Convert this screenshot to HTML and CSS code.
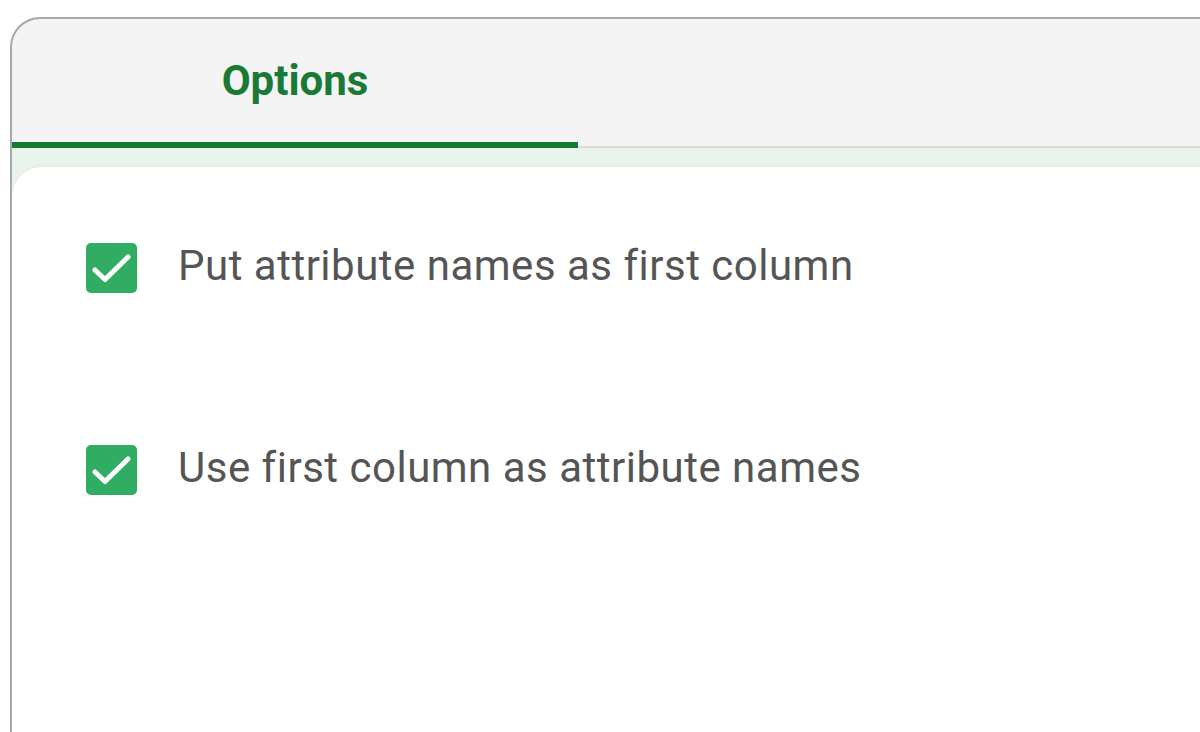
FILE: index.html
```html
<!DOCTYPE html>
<html lang="en">
<head>
    <meta charset="UTF-8">
    <meta name="viewport" content="width=device-width, initial-scale=1.0">
    <title>Options</title>
    <link rel="stylesheet" href="styles.css">
</head>
<body>
    <div class="panel">
        <div class="tabs">
            <div class="tab active">Options</div>
        </div>
        <div class="band">
            <div class="content">
                <label class="option">
                    <span class="check">
                        <svg viewBox="0 0 51 50" width="51" height="50"><path d="M9 27l10 9.5L42 14" fill="none" stroke="#fff" stroke-width="5" stroke-linecap="round" stroke-linejoin="round"/></svg>
                    </span>
                    <span class="label">Put attribute names as first column</span>
                </label>
                <label class="option">
                    <span class="check">
                        <svg viewBox="0 0 51 50" width="51" height="50"><path d="M9 27l10 9.5L42 14" fill="none" stroke="#fff" stroke-width="5" stroke-linecap="round" stroke-linejoin="round"/></svg>
                    </span>
                    <span class="label">Use first column as attribute names</span>
                </label>
            </div>
        </div>
    </div>
</body>
</html>
```

FILE: styles.css
```css
html, body {
    margin: 0;
    padding: 0;
    height: 100%;
    background-color: #fff;
    font-family: Roboto, "Noto Sans", sans-serif;
    overflow: hidden;
}
.panel {
    margin: 17px 0 0 10px;
    height: calc(100vh - 17px);
    box-sizing: border-box;
    border: 2px solid #a8a8a8;
    border-right: none;
    border-bottom: none;
    border-top-left-radius: 30px;
    background-color: #f4f4f4;
    display: flex;
    flex-direction: column;
    overflow: hidden;
}
.tabs {
    display: flex;
    height: 127px;
    flex-shrink: 0;
    border-bottom: 2px solid #dcdcdc;
}
.tab {
    width: 566px;
    display: flex;
    align-items: center;
    justify-content: center;
    box-sizing: border-box;
    font-size: 42px;
    font-weight: 700;
    color: #197a36;
}
.tab.active {
    border-bottom: 6px solid #137a2f;
    margin-bottom: -2px;
}
.band {
    flex: 1;
    background-color: #e8f4ec;
    padding-top: 19px;
}
.content {
    height: 100%;
    background-color: #fff;
    border-top-left-radius: 30px;
    box-shadow: 0 -2px 4px rgba(0, 0, 0, 0.03);
    padding: 76px 0 0 74px;
    box-sizing: border-box;
    display: flex;
    flex-direction: column;
    gap: 152px;
}
.option {
    display: flex;
    align-items: center;
    gap: 41px;
    height: 50px;
}
.check {
    width: 51px;
    height: 50px;
    border-radius: 5px;
    background-color: #30ad63;
    display: flex;
}
.label {
    padding-bottom: 5px;
    font-size: 42px;
    letter-spacing: 0.5px;
    color: #555;
}
```
